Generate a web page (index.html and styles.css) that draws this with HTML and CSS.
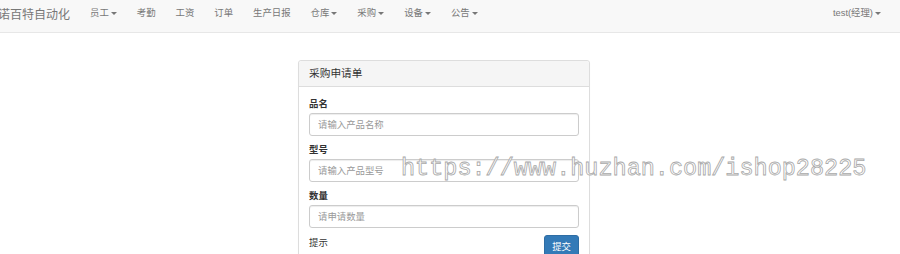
FILE: index.html
```html
<!DOCTYPE html>
<html lang="zh-CN">
<head>
  <meta charset="UTF-8" />
  <title>采购申请单</title>
  <link rel="stylesheet" href="styles.css">
</head>
<body>

  <nav class="navbar">
    <a class="brand" href="#">诺百特自动化</a>
    <ul class="nav">
      <li><a href="#">员工<span class="caret"></span></a></li>
      <li><a href="#">考勤</a></li>
      <li><a href="#">工资</a></li>
      <li><a href="#">订单</a></li>
      <li><a href="#">生产日报</a></li>
      <li><a href="#">仓库<span class="caret"></span></a></li>
      <li><a href="#">采购<span class="caret"></span></a></li>
      <li><a href="#">设备<span class="caret"></span></a></li>
      <li><a href="#">公告<span class="caret"></span></a></li>
    </ul>
    <ul class="nav nav-right">
      <li><a href="#">test(经理)<span class="caret"></span></a></li>
    </ul>
  </nav>

  <div class="panel">
    <div class="panel-heading">采购申请单</div>
    <form class="panel-body">
      <div class="form-group">
        <label for="name">品名</label>
        <input id="name" type="text" placeholder="请输入产品名称">
      </div>
      <div class="form-group">
        <label for="model">型号</label>
        <input id="model" type="text" placeholder="请输入产品型号">
      </div>
      <div class="form-group">
        <label for="qty">数量</label>
        <input id="qty" type="text" placeholder="请申请数量">
      </div>
      <div class="form-foot">
        <span class="hint">提示</span>
        <button type="submit">提交</button>
      </div>
    </form>
  </div>

  <div class="watermark">https://www.huzhan.com/ishop28225</div>

</body>
</html>
```

FILE: styles.css
```css
body {
  margin: 0;
  font-family: "Liberation Sans", "Noto Sans CJK SC", sans-serif;
  font-size: 9.4px;
  color: #333;
  background: #fff;
  overflow: hidden;
}
a {
  text-decoration: none;
}
.navbar {
  display: flex;
  align-items: flex-start;
  height: 32px;
  background: #f8f8f8;
  border-bottom: 1px solid #e7e7e7;
  padding-right: 10px;
}
.brand {
  margin-left: -2px;
  padding: 7px 10px 0 0;
  font-size: 12px;
  line-height: 16px;
  color: #777;
}
.nav {
  display: flex;
  list-style: none;
  margin: 0;
  padding: 0;
}
.nav a {
  display: block;
  padding: 6px 10px 0;
  line-height: 13px;
  color: #777;
}
.nav-right {
  margin-left: auto;
}
.nav-right a {
  padding-right: 9px;
}
.caret {
  display: inline-block;
  width: 0;
  height: 0;
  margin-left: 2px;
  vertical-align: middle;
  border-top: 3px solid #777;
  border-left: 3px solid transparent;
  border-right: 3px solid transparent;
}
.panel {
  width: 290px;
  margin: 27px 0 0 298px;
  border: 1px solid #ddd;
  border-radius: 3px;
  background: #fff;
  box-shadow: 0 1px 1px rgba(0,0,0,0.05);
}
.panel-heading {
  padding: 6px 10px;
  font-size: 10.7px;
  line-height: 13px;
  background: #f5f5f5;
  border-bottom: 1px solid #ddd;
  border-radius: 3px 3px 0 0;
}
.panel-body {
  padding: 10px;
  margin: 0;
}
.form-group {
  margin-bottom: 7px;
}
label {
  display: block;
  font-weight: bold;
  line-height: 13px;
  margin-bottom: 3px;
}
input {
  display: block;
  box-sizing: border-box;
  width: 100%;
  height: 23px;
  padding: 0 8px;
  font-family: inherit;
  font-size: 9.4px;
  color: #555;
  border: 1px solid #ccc;
  border-radius: 3px;
  box-shadow: inset 0 1px 1px rgba(0,0,0,0.075);
}
input::placeholder {
  color: #999;
}
.form-foot {
  display: flex;
  justify-content: space-between;
  align-items: flex-start;
}
.hint {
  line-height: 13px;
  padding-top: 1px;
}
button {
  height: 22px;
  padding: 0 7px;
  font-family: inherit;
  font-size: 9.4px;
  color: #fff;
  background: #337ab7;
  border: 1px solid #2e6da4;
  border-radius: 3px;
}
.watermark {
  position: absolute;
  left: 401px;
  top: 154px;
  font-family: "Liberation Mono", monospace;
  font-size: 23.5px;
  line-height: 30px;
  color: #fff;
  -webkit-text-stroke: 0.8px #a8a8a8;
  pointer-events: none;
}
```
